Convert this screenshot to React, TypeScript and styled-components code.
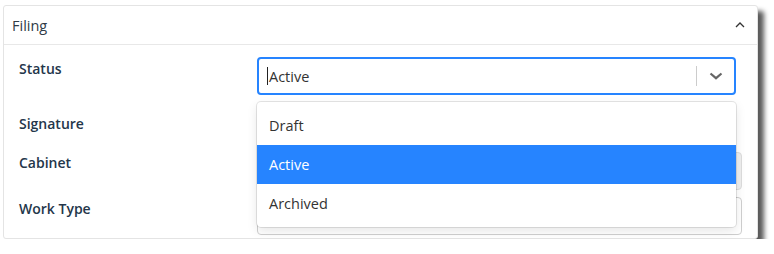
import * as React from 'react'
import styled, { createGlobalStyle } from 'styled-components'

const GlobalStyle = createGlobalStyle`
  html, body {
    margin: 0;
    padding: 0;
    background: #ffffff;
  }
  body {
    font-family: 'Open Sans', 'Noto Sans', sans-serif;
    color: #333;
  }
`

const options = ['Draft', 'Active', 'Archived']

const App: React.FC = () => {
  const [value] = React.useState<string>('Active')

  return (
    <Page>
      <GlobalStyle />
      <Card>
        <CardHeader>
          <HeaderTitle>Filing</HeaderTitle>
          <svg width='10' height='6' viewBox='0 0 10 6'>
            <path d='M1 5 L5 1 L9 5' fill='none' stroke='#333' strokeWidth='1.3' />
          </svg>
        </CardHeader>
        <FormBody>
          <FieldLabel>Status</FieldLabel>
          <Control>
            <SelectBox>
              <ValueArea>
                <Caret />
                {value}
              </ValueArea>
              <Indicators>
                <Separator />
                <svg width='14' height='8' viewBox='0 0 14 8'>
                  <path d='M1.5 1.5 L7 6.2 L12.5 1.5' fill='none' stroke='#666' strokeWidth='2.2' />
                </svg>
              </Indicators>
            </SelectBox>
            <Menu>
              {options.map((opt) => (
                <Option key={opt} $active={opt === value}>
                  {opt}
                </Option>
              ))}
            </Menu>
          </Control>

          <FieldLabel $top={12}>Signature</FieldLabel>
          <Control $height={43}>
            <Toggle />
          </Control>

          <FieldLabel $top={1}>Cabinet</FieldLabel>
          <Control>
            <TextBox $disabled />
          </Control>

          <FieldLabel $top={2}>Work Type</FieldLabel>
          <Control>
            <TextBox />
          </Control>
        </FormBody>
      </Card>
    </Page>
  )
}

export default App

const Page = styled.div`
  padding: 5px 0 0 3px;
`

// card carries the screenshot's drop shadow on its right and bottom edges
const Card = styled.div`
  width: 753px;
  height: 232px;
  background: #fff;
  border: 1px solid #e4e4e4;
  border-radius: 3px;
  box-shadow: 6px 6px 5px rgba(0, 0, 0, 0.65);
`

const CardHeader = styled.div`
  height: 38px;
  display: flex;
  align-items: center;
  justify-content: space-between;
  padding: 0 12px 0 8px;
  border-bottom: 1px solid #e8e8e8;
`

const HeaderTitle = styled.span`
  font-size: 14.5px;
  color: #2f3b47;
`

const FormBody = styled.div`
  display: grid;
  grid-template-columns: 238px 1fr;
  row-gap: 7px;
  padding: 12px 15px 0 15px;
`

const FieldLabel = styled.div<{ $top?: number }>`
  padding-top: ${(p) => p.$top ?? 2}px;
  font-size: 14px;
  line-height: 20px;
  font-weight: 600;
  color: #24364a;
`

const Control = styled.div<{ $height?: number }>`
  position: relative;
  height: ${(p) => p.$height ?? 38}px;
`

const SelectBox = styled.div`
  box-sizing: border-box;
  width: calc(100% - 6px);
  height: 38px;
  border: 2px solid #2684ff;
  border-radius: 4px;
  display: flex;
  align-items: center;
  background: #fff;
`

const ValueArea = styled.div`
  flex: 1;
  display: flex;
  align-items: center;
  padding-left: 8px;
  font-size: 14.5px;
  color: #333;
`

const Caret = styled.span`
  display: inline-block;
  width: 1px;
  height: 18px;
  background: #222;
  margin-right: 1px;
`

const Indicators = styled.div`
  display: flex;
  align-items: center;
  height: 100%;
  padding-right: 11px;
  gap: 12px;
`

const Separator = styled.span`
  width: 1px;
  height: 20px;
  background: #ccc;
`

const Menu = styled.div`
  position: absolute;
  top: 45px;
  left: 0;
  width: calc(100% - 6px);
  z-index: 10;
  background: #fff;
  border-radius: 4px;
  padding: 4px 0;
  box-shadow: 0 0 0 1px rgba(0, 0, 0, 0.1), 0 4px 11px rgba(0, 0, 0, 0.1);
`

const Option = styled.div<{ $active?: boolean }>`
  height: 39px;
  display: flex;
  align-items: center;
  padding-left: 12px;
  font-size: 14.5px;
  background: ${(p) => (p.$active ? '#2684ff' : '#fff')};
  color: ${(p) => (p.$active ? '#fff' : '#333')};
`

const Toggle = styled.div`
  margin-top: 14px;
  width: 36px;
  height: 12px;
  border-left: 2px solid #28a745;
  border-radius: 2px;
  background: #e9f5ec;
`

const TextBox = styled.div<{ $disabled?: boolean }>`
  box-sizing: border-box;
  height: 38px;
  border: 1px solid ${(p) => (p.$disabled ? '#dcdcdc' : '#cfcfcf')};
  border-radius: 4px;
  background: ${(p) => (p.$disabled ? '#efefef' : '#fff')};
`
